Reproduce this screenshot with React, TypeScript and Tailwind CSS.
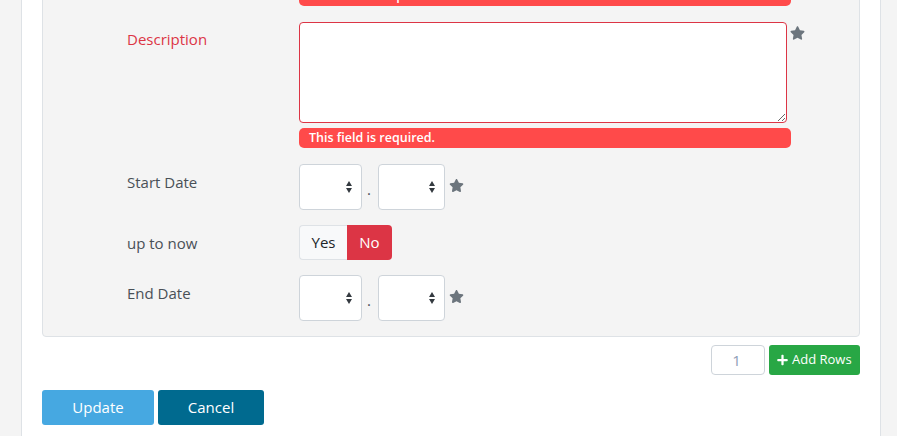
import React from "react";

const Star = ({ className = "" }: { className?: string }) => (
  <svg viewBox="0 0 576 512" className={className} fill="#6c757d">
    <path d="M259.3 17.8L194 150.2 47.9 171.5c-26.2 3.8-36.7 36.1-17.7 54.6l105.7 103-25 145.5c-4.5 26.3 23.2 46 46.4 33.7L288 439.6l130.7 68.7c23.2 12.2 50.9-7.4 46.4-33.7l-25-145.5 105.7-103c19-18.5 8.5-50.8-17.7-54.6L382 150.2 316.7 17.8c-11.7-23.6-45.6-23.9-57.4 0z" />
  </svg>
);

const Arrows = () => (
  <svg viewBox="0 0 6 12" className="w-[6px] h-[12px]" fill="#343a40">
    <path d="M3 0 L6 5 L0 5 Z" />
    <path d="M0 7 L6 7 L3 12 Z" />
  </svg>
);

const FakeSelect = ({ w }: { w: string }) => (
  <div className={`${w} h-[46px] bg-white border border-[#ced4da] rounded-[4px] flex items-center justify-end pr-[9px]`}>
    <Arrows />
  </div>
);

const DateRow = ({ label }: { label: string }) => (
  <div className="flex">
    <div className="w-[256px] pl-[84px] pt-[7px] text-[15px] leading-[22px] text-[#495057]">{label}</div>
    <div className="flex items-center">
      <FakeSelect w="w-[63px]" />
      <span className="w-[16px] pl-[5px] text-[15px] leading-[22px] text-[#495057] pt-[3px]">.</span>
      <div className="w-[67px] h-[46px] bg-white border border-[#ced4da] rounded-[4px] flex items-center justify-end pr-[9px]">
        <Arrows />
      </div>
      <Star className="w-[15px] h-[13px] ml-[4px] -mt-[4px]" />
    </div>
  </div>
);

const ErrorBadge = () => (
  <div className="w-[492px] h-[20px] rounded-[5px] bg-[#ff4a4a] text-white text-[12.5px] leading-[20px] font-semibold pl-[10px]">
    This field is required.
  </div>
);

export default function App() {
  return (
    <div className="w-[897px] h-[436px] overflow-hidden bg-[#f4f4f4] font-['Open_Sans',sans-serif]">
      <div className="ml-[21px] w-[860px] h-full bg-white border-x border-[#dee2e6] px-[20px] flow-root">
        <div className="-mt-[15px]">
          <div className="border border-[#dee2e6] rounded-[4px] bg-[#f4f4f4] pb-[15px]">
            <div className="flex">
              <div className="w-[256px]" />
              <ErrorBadge />
            </div>

            <div className="flex mt-[16px]">
              <div className="w-[256px] pl-[84px] pt-[6px] text-[15px] leading-[22px] text-[#dc3545]">Description</div>
              <div className="flex flex-col">
                <div className="flex items-start">
                  <textarea className="w-[488px] h-[101px] bg-white border border-[#dc3545] rounded-[4px] outline-none resize-y block" />
                  <Star className="w-[15px] h-[14px] ml-[3px] mt-[4px]" />
                </div>
                <div className="mt-[5px]">
                  <ErrorBadge />
                </div>
              </div>
            </div>

            <div className="mt-[16px]">
              <DateRow label="Start Date" />
            </div>

            <div className="flex mt-[15px]">
              <div className="w-[256px] pl-[84px] pt-[7px] text-[15px] leading-[22px] text-[#495057]">up to now</div>
              <div className="flex h-[35px]">
                <div className="w-[48px] bg-[#f8f9fa] border border-[#dee2e6] border-r-0 rounded-l-[4px] flex items-center justify-center text-[15px] text-[#212529]">Yes</div>
                <div className="w-[45px] bg-[#dc3545] rounded-r-[4px] flex items-center justify-center text-[15px] text-white">No</div>
              </div>
            </div>

            <div className="mt-[15px]">
              <DateRow label="End Date" />
            </div>
          </div>

          <div className="flex justify-end mt-[8px] gap-[4px]">
            <div className="w-[54px] h-[30px] bg-white border border-[#ced4da] rounded-[4px] flex items-center justify-center pr-[3px] text-[15px] text-[#8d9db6]">1</div>
            <div className="w-[91px] h-[30px] bg-[#28a745] rounded-[3px] flex items-center pl-[8px] gap-[4px] text-white text-[13px]">
              <svg viewBox="0 0 448 512" className="w-[11px] h-[12px]" fill="white">
                <path d="M416 208H272V64c0-17.670-14.330-32-32-32h-32c-17.670 0-32 14.330-32 32v144H32c-17.670 0-32 14.330-32 32v32c0 17.670 14.330 32 32 32h144v144c0 17.670 14.330 32 32 32h32c17.670 0 32-14.330 32-32V304h144c17.670 0 32-14.330 32-32v-32c0-17.670-14.330-32-32-32z" />
              </svg>
              <span>Add Rows</span>
            </div>
          </div>

          <div className="flex gap-[4px] mt-[15px]">
            <div className="w-[112px] h-[35px] bg-[#46a8e1] rounded-[3px] flex items-center justify-center text-white text-[15px]">Update</div>
            <div className="w-[106px] h-[35px] bg-[#006a8f] rounded-[3px] flex items-center justify-center text-white text-[15px]">Cancel</div>
          </div>
        </div>
      </div>
    </div>
  );
}
